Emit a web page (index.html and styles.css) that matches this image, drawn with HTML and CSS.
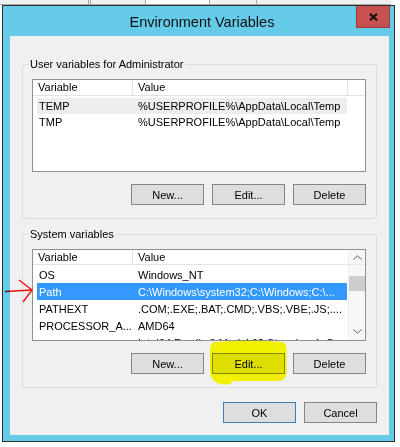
FILE: index.html
```html
<!DOCTYPE html>
<html>
<head>
<meta charset="utf-8">
<link rel="stylesheet" href="styles.css">
</head>
<body>
<div class="tabs">
  <div class="tab tab-a"></div>
  <div class="tab tab-b"></div>
  <div class="tab tab-c"></div>
  <div class="tab tab-d"></div>
  <div class="tab tab-e"></div>
  <div class="tab tab-f"></div>
</div>
<div class="dialog">
  <div class="titlebar">
    <span class="title">Environment Variables</span>
    <div class="close">
      <svg width="9" height="8" viewBox="0 0 9 8"><path d="M1 0.8 L8 7.2 M8 0.8 L1 7.2" stroke="#111" stroke-width="2.1" fill="none"/></svg>
    </div>
  </div>
  <div class="client">
    <fieldset class="group">
      <legend>User variables for Administrator</legend>
      <div class="list list-user">
        <div class="lv-main">
          <div class="lv-head">
            <div class="hc hc1">Variable</div>
            <div class="hc hc2">Value</div>
            <div class="hc hc3"></div>
          </div>
          <div class="rows">
            <div class="row hover"><span class="cell1">TEMP</span><span class="cell2">%USERPROFILE%\AppData\Local\Temp</span></div>
            <div class="row"><span class="cell1">TMP</span><span class="cell2">%USERPROFILE%\AppData\Local\Temp</span></div>
          </div>
        </div>
      </div>
      <div class="btns">
        <button class="btn">New...</button>
        <button class="btn">Edit...</button>
        <button class="btn">Delete</button>
      </div>
    </fieldset>
    <fieldset class="group group-sys">
      <legend>System variables</legend>
      <div class="list list-sys">
        <div class="lv-main">
          <div class="lv-head">
            <div class="hc hc1">Variable</div>
            <div class="hc hc2">Value</div>
          </div>
          <div class="rows">
            <div class="row"><span class="cell1">OS</span><span class="cell2">Windows_NT</span></div>
            <div class="row selected"><span class="cell1">Path</span><span class="cell2">C:\Windows\system32;C:\Windows;C:\...</span></div>
            <div class="row"><span class="cell1">PATHEXT</span><span class="cell2">.COM;.EXE;.BAT;.CMD;.VBS;.VBE;.JS;....</span></div>
            <div class="row"><span class="cell1">PROCESSOR_A...</span><span class="cell2">AMD64</span></div>
            <div class="row"><span class="cell1"></span><span class="cell2">Intel64 Family 6 Model 62 Stepping 4, G...</span></div>
          </div>
        </div>
        <div class="sb">
          <div class="sb-btn sb-up"><svg width="9" height="5" viewBox="0 0 9 5"><path d="M0.5 4.5 L4.5 0.8 L8.5 4.5" stroke="#606060" stroke-width="1" fill="none"/></svg></div>
          <div class="sb-track"><div class="sb-thumb"></div></div>
          <div class="sb-btn sb-down"><svg width="9" height="5" viewBox="0 0 9 5"><path d="M0.5 0.5 L4.5 4.2 L8.5 0.5" stroke="#606060" stroke-width="1" fill="none"/></svg></div>
        </div>
      </div>
      <div class="btns">
        <button class="btn">New...</button>
        <button class="btn">Edit...</button>
        <button class="btn">Delete</button>
      </div>
    </fieldset>
    <div class="dlg-btns">
      <button class="btn btn-default">OK</button>
      <button class="btn">Cancel</button>
    </div>
  </div>
</div>
<svg class="overlay" width="400" height="447" viewBox="0 0 400 447">
  <path d="M215 342 Q250 339 283 342 Q287 344 286.5 350 L286.5 373 Q286 380 278 381 L233 381 Q231 385 223 384.5 Q215 383 212.5 379 Q210 376 210 369 L210 349 Q211 342 215 342 Z" fill="#ffff00"/>
  <path d="M5 291.5 L32 290" stroke="#ff1010" stroke-width="1.4" fill="none"/>
  <path d="M19 280 L32 290 L23 302" stroke="#ff1010" stroke-width="1.4" fill="none" stroke-linejoin="round"/>
</svg>
</body>
</html>
```
FILE: styles.css
```css
* { box-sizing: border-box; }

body {
  margin: 0;
  width: 400px;
  height: 447px;
  overflow: hidden;
  position: relative;
  background: #ffffff;
  font-family: "Liberation Sans", Arial, sans-serif;
  font-size: 11px;
  color: #000;
}

.tabs {
  display: flex;
  width: 391px;
  height: 5px;
  background: #f0f0f0;
  border-bottom: 1px solid #a9a9a9;
}
.tab { border-right: 1px solid #a9a9a9; }
.tab-a { width: 89px; }
.tab-b { width: 2px; }
.tab-c { width: 55px; }
.tab-d { width: 64px; background: #ffffff; }
.tab-e { width: 47px; }
.tab-f { flex: 1; border-right: 0; }

.dialog {
  margin-left: 2px;
  width: 393px;
  border: 1px solid #2f2f2f;
  background: #65cbe9;
  padding: 0 5px 6px 7px;
}

.titlebar {
  position: relative;
  height: 30px;
  margin-right: -5px;
  display: flex;
  align-items: center;
  justify-content: center;
}

.title {
  font-size: 14.5px;
  color: #111;
  padding-top: 1px;
}

.close {
  position: absolute;
  top: 0;
  right: 4px;
  width: 34px;
  height: 22px;
  background: #c75050;
  border: 1px solid #9a3b3b;
  border-top: 0;
  display: flex;
  align-items: center;
  justify-content: center;
}

.client {
  height: 399px;
  background: #f0f0f0;
  padding: 21px 12px 12px 12px;
  display: flex;
  flex-direction: column;
}

.group {
  margin: 0;
  min-width: 0;
  padding: 8px 10px 13px 9px;
  border: 1px solid #dcdcdc;
  border-radius: 3px;
  display: flex;
  flex-direction: column;
}

.group-sys { margin-top: 8px; }

.group legend {
  padding: 0 2px;
  margin-left: -4px;
  line-height: 14px;
  font-size: 11px;
}

.list {
  display: flex;
  background: #ffffff;
  border: 1px solid #919191;
  overflow: hidden;
}
.list-user { height: 93px; }
.list-sys { height: 92px; }

.lv-main {
  flex: 1;
  min-width: 0;
  overflow: hidden;
}

.lv-head {
  display: flex;
  height: 16px;
  border-bottom: 1px solid #e3e3e3;
}
.list-sys .lv-head { height: 15px; }

.hc {
  padding-left: 5px;
  line-height: 15px;
  white-space: nowrap;
}
.list-sys .hc { line-height: 14px; }
.hc1 { width: 100px; border-right: 1px solid #e3e3e3; }
.hc2 { width: 215px; border-right: 1px solid #e3e3e3; }
.list-sys .hc2 { width: 214px; border-right: 0; }
.hc3 { flex: 1; }

.rows { padding-top: 2px; }
.list-sys .rows { padding-top: 1px; }

.row {
  display: flex;
  align-items: center;
  height: 16px;
  margin-left: 4px;
  width: 310px;
  white-space: nowrap;
  overflow: hidden;
}
.list-sys .row { height: 17px; }

.row.hover { background: #ededed; }
.row.selected { background: #3399ff; color: #ffffff; }

.cell1 {
  width: 101px;
  flex: none;
  padding-left: 2px;
  overflow: hidden;
}
.cell2 {
  flex: 1;
  overflow: hidden;
}

.sb {
  width: 17px;
  flex: none;
  display: flex;
  flex-direction: column;
  background: #f7f7f7;
  border-left: 1px solid #f0f0f0;
}
.sb-btn {
  display: flex;
  align-items: center;
  justify-content: center;
}
.sb-up { height: 15px; border-bottom: 1px solid #e8e8e8; }
.sb-down { height: 17px; }
.sb-track {
  flex: 1;
  padding-top: 11px;
}
.sb-thumb {
  height: 15px;
  background: #cdcdcd;
}

.btns {
  display: flex;
  justify-content: flex-end;
  gap: 8px;
  margin-top: 12px;
}

.btn {
  width: 73px;
  height: 21px;
  margin: 0;
  padding: 0;
  border: 1px solid #858585;
  background: #dedede;
  font-family: "Liberation Sans", Arial, sans-serif;
  font-size: 11px;
  color: #000;
}

.btn-default { border-color: #3c7fb1; }

.dlg-btns {
  display: flex;
  justify-content: flex-end;
  gap: 8px;
  margin-top: 14px;
}

.overlay {
  position: absolute;
  left: 0;
  top: 0;
  pointer-events: none;
  mix-blend-mode: multiply;
}
```
